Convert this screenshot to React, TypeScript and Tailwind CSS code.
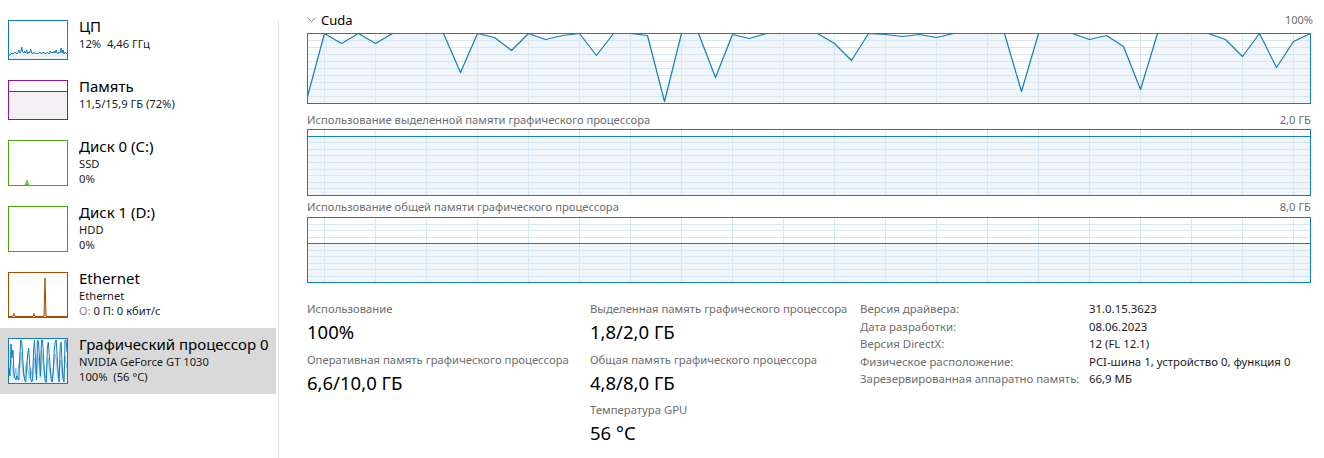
import React from "react"

const BLUE = "#117dbb"

type Pt = [number, number]

// cuda usage samples, pixel y of the reference (33 = 100%, 103 = 0%)
const cuda = [
  96, 33, 43, 33, 43, 33, 33, 33, 33, 72, 33, 37, 50, 33, 39, 35, 33, 55, 33, 33,
  35, 101, 33, 33, 77, 34, 38, 33, 33, 33, 33, 43, 60, 33, 34, 36, 34, 37, 33, 33,
  33, 33, 91, 33, 33, 33, 39, 35, 46, 89, 33, 33, 33, 33, 39, 56, 33, 67, 41, 33,
]

const cpu = [
  35, 35, 34, 33, 34, 33, 32, 33, 34, 33, 30, 33, 32, 27, 32, 33, 31, 33, 30, 34,
  32, 33, 29, 33, 34, 32, 33, 34, 33, 34, 33, 33, 32, 34, 33, 32, 33, 34, 33, 32,
  33, 34, 31, 33, 32, 33, 31, 33, 30, 33, 34, 32, 33, 28, 33, 30, 34, 32, 33, 34,
]

const gpuA = [
  30, 38, 6, 20, 12, 34, 40, 42, 38, 40, 42, 18, 2, 4, 20, 36, 42, 44, 30, 16,
  10, 26, 40, 44, 42, 12, 2, 24, 42, 2, 4, 20, 38, 2, 2, 16, 34, 44, 44, 10,
  4, 18, 30, 42, 44, 34, 12, 4, 2, 18, 34, 44, 10, 4, 26, 42, 44, 2, 2, 14,
]
const gpuB = [
  36, 30, 20, 28, 32, 40, 36, 30, 42, 36, 26, 30, 14, 22, 32, 38, 40, 30, 24, 30,
  36, 40, 30, 36, 40, 26, 20, 34, 38, 16, 22, 30, 40, 12, 20, 28, 38, 40, 34, 24,
  20, 30, 36, 40, 38, 30, 24, 16, 20, 30, 40, 38, 26, 22, 36, 40, 34, 18, 24, 30,
]

function toLine(vals: number[], w: number): Pt[] {
  return vals.map((v, i) => [1 + (i * (w - 2)) / (vals.length - 1), v])
}

function BigChart({ h, points }: { h: number; points: Pt[] }) {
  const w = 1004
  const bottom = h - 0.5
  const line = points.map((p) => p.join(",")).join(" ")
  const area = `0.5,${bottom} ${line} ${w - 0.5},${bottom}`
  const hLines = Array.from({ length: 9 }, (_, k) => Math.round(((k + 1) * (h - 1)) / 10) + 0.5)
  const vLines: number[] = []
  for (let x = 17; x < w - 1; x += 51) vLines.push(x + 0.5)
  return (
    <svg width={w} height={h} className="block shrink-0">
      <rect x={0} y={0} width={w} height={h} fill="#fff" />
      <polygon points={area} fill="#f0f5fa" />
      <g stroke="#d6e7f3" strokeWidth={1}>
        {hLines.map((y) => (
          <line key={"h" + y} x1={0} x2={w} y1={y} y2={y} />
        ))}
        {vLines.map((x) => (
          <line key={"v" + x} x1={x} x2={x} y1={0} y2={h} />
        ))}
      </g>
      <polyline points={line} fill="none" stroke={BLUE} strokeWidth={1.2} strokeLinejoin="round" />
      <rect x={0.5} y={0.5} width={w - 1} height={h - 1} fill="none" stroke={BLUE} strokeWidth={1} />
    </svg>
  )
}

function Thumb({ h, color, children }: { h: number; color: string; children?: React.ReactNode }) {
  return (
    <svg width={60} height={h} className="block shrink-0">
      <rect x={0} y={0} width={60} height={h} fill="#fff" />
      {children}
      <rect x={0.5} y={0.5} width={59} height={h - 1} fill="none" stroke={color} />
    </svg>
  )
}

function Area({ vals, h, color, fill }: { vals: number[]; h: number; color: string; fill: string }) {
  const pts = toLine(vals, 60)
  const line = pts.map((p) => p.join(",")).join(" ")
  return (
    <>
      <polygon points={`1,${h - 1} ${line} 59,${h - 1}`} fill={fill} />
      <polyline points={line} fill="none" stroke={color} strokeWidth={1} />
    </>
  )
}

function SideItem({
  className,
  thumb,
  title,
  children,
}: {
  className: string
  thumb: React.ReactNode
  title: string
  children: React.ReactNode
}) {
  return (
    <div className={"flex w-[276px] shrink-0 pl-[8px] pt-[10px] " + className}>
      {thumb}
      <div className="ml-[11px] -mt-[4px] flex flex-col">
        <div className="text-[15px] leading-[20px] text-black">{title}</div>
        <div className="text-[11.2px] leading-[15px] text-[#1a1a1a]">{children}</div>
      </div>
    </div>
  )
}

function Stat({ label, value }: { label: string; value: string }) {
  return (
    <div className="pb-[6.5px]">
      <div className="text-[11.3px] leading-[16px] text-[#6d6d6d]">{label}</div>
      <div className="mt-[2px] text-[18.5px] leading-[26px] text-black">{value}</div>
    </div>
  )
}

const info: [string, string][] = [
  ["Версия драйвера:", "31.0.15.3623"],
  ["Дата разработки:", "08.06.2023"],
  ["Версия DirectX:", "12 (FL 12.1)"],
  ["Физическое расположение:", "PCI-шина 1, устройство 0, функция 0"],
  ["Зарезервированная аппаратно память:", "66,9 МБ"],
]

export default function App() {
  const cudaPts: Pt[] = cuda.map((v, i) => [17 * i + 0.5, v - 33 + 0.5])

  return (
    <div className="flex h-[458px] w-[1324px] overflow-hidden bg-white font-['Segoe_UI','Noto_Sans',sans-serif] text-black">
      {/* Sidebar */}
      <div className="flex w-[278px] shrink-0 flex-col pt-[10px]">
        <SideItem
          className="h-[60px]"
          title="ЦП"
          thumb={
            <Thumb h={40} color={BLUE}>
              <Area vals={cpu} h={40} color={BLUE} fill="#eef5fa" />
            </Thumb>
          }
        >
          12%&nbsp; 4,46 ГГц
        </SideItem>

        <SideItem
          className="h-[60px]"
          title="Память"
          thumb={
            <Thumb h={40} color="#8b12ae">
              <rect x={1} y={11} width={58} height={28} fill="#f2f0f3" />
              <line x1={1} x2={59} y1={11.5} y2={11.5} stroke="#8b12ae" />
            </Thumb>
          }
        >
          11,5/15,9 ГБ (72%)
        </SideItem>

        <SideItem
          className="h-[66px]"
          title="Диск 0 (C:)"
          thumb={
            <Thumb h={46} color="#4da60c">
              <polygon points="17,45 19,40 21,45" fill="#8cc95f" stroke="#4da60c" strokeWidth={0.6} />
            </Thumb>
          }
        >
          <div>SSD</div>
          <div>0%</div>
        </SideItem>

        <SideItem className="h-[66px]" title="Диск 1 (D:)" thumb={<Thumb h={46} color="#4da60c" />}>
          <div>HDD</div>
          <div>0%</div>
        </SideItem>

        <SideItem
          className="h-[66px]"
          title="Ethernet"
          thumb={
            <Thumb h={46} color="#a74f01">
              <polyline
                points="1,44.5 5,44.5 6,41.5 7,44.5 25,44.5 26,41.5 27,44.5 36,44.5 37,6 38,44.5 59,44.5"
                fill="#e8c7a6"
                stroke="#a74f01"
                strokeWidth={1}
              />
            </Thumb>
          }
        >
          <div>Ethernet</div>
          <div>
            <span className="text-[#8a8a8a]">О:</span> 0 П: 0 кбит/с
          </div>
        </SideItem>

        <SideItem
          className="h-[66px] bg-[#d9d9d9]"
          title="Графический процессор 0"
          thumb={
            <Thumb h={46} color={BLUE}>
              <Area vals={gpuB} h={46} color="#8cbfe3" fill="#eaf3fa" />
              <Area vals={gpuA} h={46} color={BLUE} fill="none" />
            </Thumb>
          }
        >
          <div>NVIDIA GeForce GT 1030</div>
          <div>100%&nbsp; (56 °C)</div>
        </SideItem>
      </div>

      <div className="mt-[20px] w-px shrink-0 bg-[#e3e3e3]" />

      {/* Main */}
      <div className="w-[1045px] shrink-0 pl-[28px] pr-[13px]">
        <div className="flex h-[33px] items-center justify-between pt-[6px]">
          <div className="flex items-center">
            <svg width={9} height={6} className="block">
              <path d="M0.5 0.8 L4.5 4.6 L8.5 0.8" fill="none" stroke="#7a7a7a" strokeWidth={1} />
            </svg>
            <span className="ml-[5px] text-[13px] leading-[18px] text-black">Cuda</span>
          </div>
          <span className="-mr-[2px] text-[11px] leading-[16px] text-[#6d6d6d]">100%</span>
        </div>
        <BigChart h={71} points={cudaPts} />

        <div className="flex h-[25px] items-end justify-between pb-[1px] text-[11.2px] leading-[16px] text-[#6d6d6d]">
          <span>Использование выделенной памяти графического процессора</span>
          <span>2,0 ГБ</span>
        </div>
        <BigChart
          h={67}
          points={[
            [0.5, 7.5],
            [1003.5, 7.5],
          ]}
        />

        <div className="flex h-[21px] items-end justify-between pb-[2px] text-[11.2px] leading-[16px] text-[#6d6d6d]">
          <span>Использование общей памяти графического процессора</span>
          <span>8,0 ГБ</span>
        </div>
        <BigChart
          h={66}
          points={[
            [0.5, 26.5],
            [1003.5, 26.5],
          ]}
        />

        {/* Stats */}
        <div className="mt-[17px] flex">
          <div className="w-[283px] shrink-0 pt-[1px]">
            <Stat label="Использование" value="100%" />
            <Stat label="Оперативная память графического процессора" value="6,6/10,0 ГБ" />
          </div>
          <div className="w-[270px] shrink-0 pt-[1px]">
            <Stat label="Выделенная память графического процессора" value="1,8/2,0 ГБ" />
            <Stat label="Общая память графического процессора" value="4,8/8,0 ГБ" />
            <Stat label="Температура GPU" value="56 °C" />
          </div>
          <div className="grid flex-1 grid-cols-[229px_1fr] content-start text-[11.4px] leading-[17.5px]">
            {info.map(([k, v]) => (
              <React.Fragment key={k}>
                <div className="text-[#6d6d6d]">{k}</div>
                <div className="text-[#1a1a1a]">{v}</div>
              </React.Fragment>
            ))}
          </div>
        </div>
      </div>
    </div>
  )
}
